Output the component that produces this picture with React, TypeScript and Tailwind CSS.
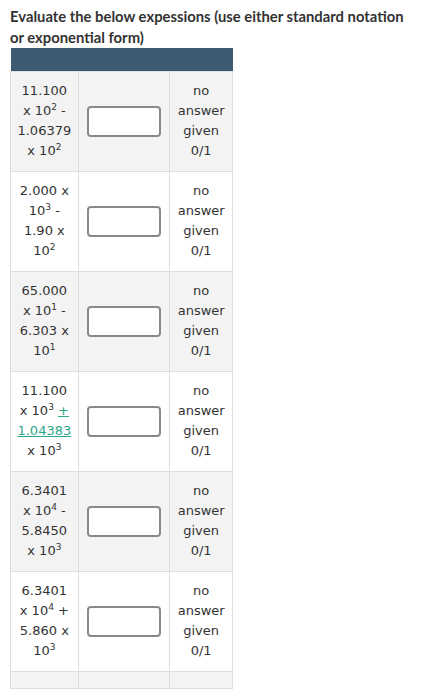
import React from "react";

type Row = {
  lines: React.ReactNode[];
  shaded: boolean;
};

const sup = (n: string) => <sup className="text-[9px] -top-[0.6em]">{n}</sup>;

const link = "text-[#2aa88a] underline";

const rows: Row[] = [
  {
    shaded: true,
    lines: ["11.100", <>x 10{sup("2")} -</>, "1.06379", <>x 10{sup("2")}</>],
  },
  {
    shaded: false,
    lines: ["2.000 x", <>10{sup("3")} -</>, "1.90 x", <>10{sup("2")}</>],
  },
  {
    shaded: true,
    lines: ["65.000", <>x 10{sup("1")} -</>, "6.303 x", <>10{sup("1")}</>],
  },
  {
    shaded: false,
    lines: [
      "11.100",
      <>
        x 10{sup("3")} <span className={link}>+</span>
      </>,
      <span className={link}>1.04383</span>,
      <>x 10{sup("3")}</>,
    ],
  },
  {
    shaded: true,
    lines: ["6.3401", <>x 10{sup("4")} -</>, "5.8450", <>x 10{sup("3")}</>],
  },
  {
    shaded: false,
    lines: ["6.3401", <>x 10{sup("4")} +</>, "5.860 x", <>10{sup("3")}</>],
  },
];

export default function App() {
  return (
    <div className="min-h-[700px] bg-white px-[10px] pt-[6px]">
      <h1 className="font-['Lato',sans-serif] font-bold text-[14.8px] leading-[21px] text-[#333]">
        Evaluate the below expessions (use either standard notation or exponential form)
      </h1>

      <table className="w-[223px] border-collapse font-['DejaVu_Sans',sans-serif] text-[13px] text-[#333]">
        <thead>
          <tr className="bg-[#3e5a72] h-[23px]">
            <th className="w-[68px]" />
            <th className="w-[92px]" />
            <th className="w-[63px]" />
          </tr>
        </thead>
        <tbody>
          {rows.map((row, i) => (
            <tr key={i} className={`h-[100px] ${row.shaded ? "bg-[#f3f3f3]" : "bg-white"}`}>
              <td className="border border-[#dedede] text-center align-middle leading-[20px] p-0">
                {row.lines.map((l, j) => (
                  <div key={j}>{l}</div>
                ))}
              </td>
              <td className="border border-[#dedede] align-middle p-0">
                <div className="mx-auto h-[31px] w-[74px] rounded-[4px] border-2 border-[#8a8a8a] bg-white" />
              </td>
              <td className="border border-[#dedede] text-center align-middle leading-[20px] p-0">
                <div>no</div>
                <div>answer</div>
                <div>given</div>
                <div>0/1</div>
              </td>
            </tr>
          ))}
          <tr className="h-[17px] bg-[#f3f3f3]">
            <td className="border border-[#dedede]" />
            <td className="border border-[#dedede]" />
            <td className="border border-[#dedede]" />
          </tr>
        </tbody>
      </table>
    </div>
  );
}
